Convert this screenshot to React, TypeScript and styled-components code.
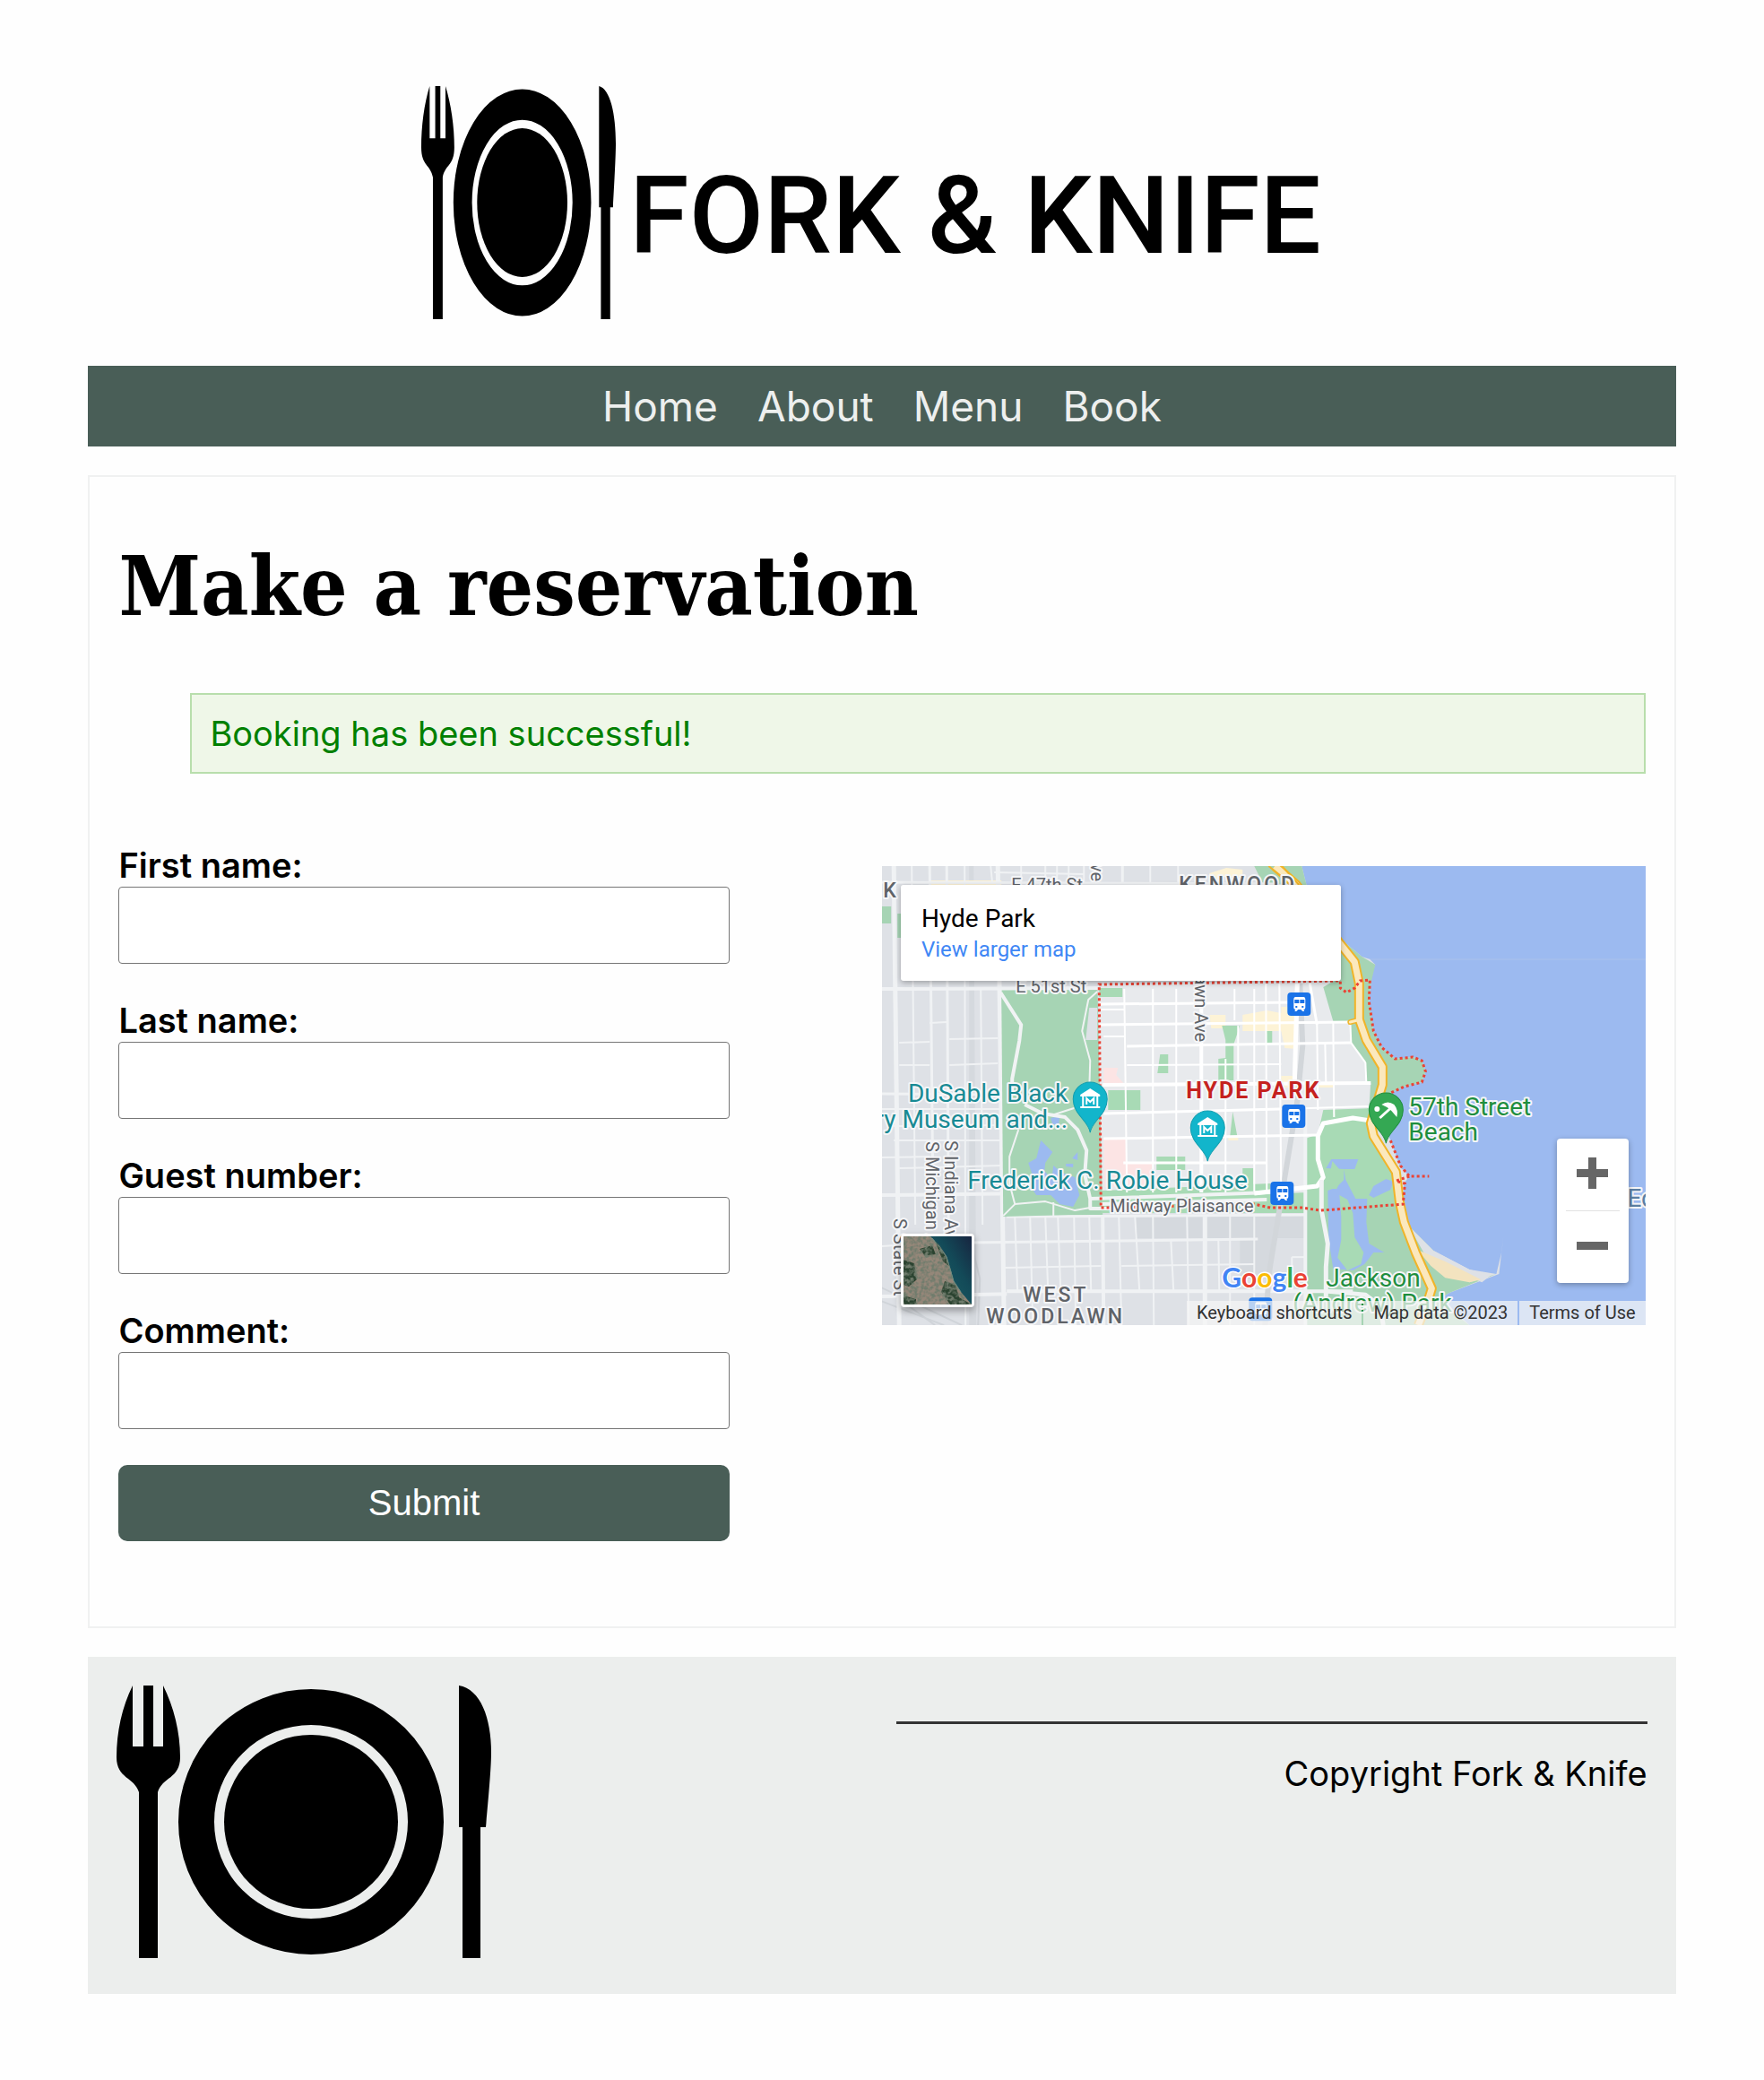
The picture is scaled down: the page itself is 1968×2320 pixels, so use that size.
import React from "react";
import styled, { createGlobalStyle } from "styled-components";

const GlobalStyle = createGlobalStyle`
  * { box-sizing: border-box; }
  body {
    margin: 0;
    background: #fefefe;
    color: #000;
    font-family: Inter, "Liberation Sans", sans-serif;
    font-size: 38px;
    line-height: 47px;
  }
`;

const sans = `Roboto, "Liberation Sans", sans-serif`;

const Page = styled.div`
  width: 90%;
  margin: 0 auto;
  padding: 96px 0;
  display: flex;
  flex-direction: column;
  gap: 32px;
`;

const Header = styled.header`
  display: flex;
  justify-content: center;
  align-items: center;
  gap: 15px;
  padding: 0 24px 20px 0;
`;

const HeaderLogo = styled.svg`
  display: block;
  width: 217px;
  height: 260px;
`;

const Wordmark = styled.span`
  padding-top: 30px;
  font-family: ${sans};
  font-size: 121px;
  font-weight: 500;
  line-height: 140px;
  white-space: nowrap;
`;

const Nav = styled.nav`
  background: #495e57;
  padding: 16px;
`;

const NavList = styled.ul`
  display: flex;
  justify-content: center;
  gap: 44px;
  margin: 0;
  padding: 0;
  list-style: none;
`;

const NavLink = styled.a`
  display: block;
  color: #edefee;
  font-size: 46px;
  line-height: 58px;
  text-decoration: none;
`;

const Card = styled.main`
  border: 2px solid #f0f1f1;
  padding: 32px;
`;

const Title = styled.h1`
  margin: 42px 0 71px;
  font-family: "DejaVu Serif Condensed", "DejaVu Serif", serif;
  font-size: 92px;
  font-weight: 700;
  line-height: 96px;
`;

const Notice = styled.p`
  margin: 0 0 0 80px;
  padding: 20px;
  border: 2px solid #b8deac;
  background: #eff7e8;
  color: #008000;
  line-height: 46px;
`;

const Columns = styled.div`
  display: grid;
  grid-template-columns: 1fr 1fr;
  align-items: start;
  margin-top: 79px;
`;

const Form = styled.form`
  width: 80%;
  padding-bottom: 63px;
`;

const Label = styled.label`
  display: block;
  font-weight: 600;
`;

const Input = styled.input`
  display: block;
  width: 100%;
  height: 86px;
  margin-bottom: 40px;
  padding: 0 20px;
  border: 1px solid #767676;
  border-radius: 4px;
  background: #fff;
  font: inherit;
`;

const SubmitButton = styled.button`
  display: block;
  width: 100%;
  height: 85px;
  border: 0;
  border-radius: 10px;
  background: #495e57;
  color: #fff;
  font-family: "Liberation Sans", Arial, sans-serif;
  font-size: 40px;
`;

const MapFrame = styled.section`
  position: relative;
  margin-top: 24px;
  aspect-ratio: 853 / 513;
  overflow: hidden;
  font-family: ${sans};
`;

const MapCanvas = styled.svg`
  display: block;
  width: 100%;
  height: 100%;
`;

const PlaceCard = styled.div`
  position: absolute;
  top: 21px;
  left: 21px;
  width: 491px;
  height: 107px;
  padding: 20px 23px;
  display: flex;
  flex-direction: column;
  border-radius: 3px;
  background: #fff;
  box-shadow: 0 2px 6px rgba(0, 0, 0, 0.3);
`;

const PlaceName = styled.strong`
  font-size: 28px;
  font-weight: 400;
  line-height: 35px;
`;

const PlaceLink = styled.a`
  color: #3f87f5;
  font-size: 24px;
  line-height: 35px;
  text-decoration: none;
`;

const ZoomBox = styled.div`
  position: absolute;
  right: 19px;
  bottom: 47px;
  width: 80px;
  padding: 0 10px;
  border-radius: 4px;
  background: #fff;
  box-shadow: 0 2px 6px rgba(0, 0, 0, 0.3);
`;

const ZoomButton = styled.button`
  display: block;
  width: 60px;
  height: 80px;
  padding: 0 11px;
  border: 0;
  background: none;

  & + & {
    height: 81px;
    border-top: 1px solid #e2e2e2;
  }
`;

const LayerButton = styled.button`
  position: absolute;
  left: 21px;
  bottom: 20px;
  width: 82px;
  height: 82px;
  padding: 0;
  border: 3px solid #fff;
  border-radius: 4px;
  overflow: hidden;
  background: #7b7567;
  box-shadow: 0 4px 8px rgba(0, 0, 0, 0.35);
`;

const Attribution = styled.div`
  position: absolute;
  right: 0;
  bottom: 0;
  display: flex;
  gap: 2px;
  font-size: 20px;
  line-height: 27px;
  color: #333;
`;

const AttributionItem = styled.span`
  padding: 0 11px;
  background: rgba(245, 245, 245, 0.72);
  white-space: nowrap;

  a {
    color: inherit;
    text-decoration: none;
  }
`;

const AttributionButton = styled.button`
  padding: 0 11px;
  border: 0;
  background: rgba(245, 245, 245, 0.72);
  color: inherit;
  font: inherit;
`;

const Footer = styled.footer`
  display: grid;
  grid-template-columns: 1fr 1fr;
  gap: 32px;
  padding: 32px 32px 40px;
  background: #eceeed;
`;

const FooterLogo = styled.svg`
  display: block;
  width: 418px;
  height: 304px;
`;

const FooterNote = styled.div`
  margin-top: 40px;
  padding-top: 32px;
  text-align: right;
  border-top: 3px solid #333;
`;

const PlaceSetting = () => (
  <>
    <path d="M18 0C6 24 0 52 0 80C0 104 20 102 25 119V304H46V119C51 102 71 104 71 80C71 52 64 24 52 0V68H41V0H30V68H18Z" />
    <circle cx="217" cy="152" r="128" fill="none" stroke="#000" strokeWidth="40" />
    <circle cx="217" cy="152" r="97" />
    <path d="M382 0C406 4 418 36 418 75C418 92 415 125 412 158H406V304H386V158H382Z" />
  </>
);

type Street = [number, number, number, number, number?];

const outerStreets: Street[] = [
  [14, 0, 20, 512, 5], [34, 0, 38, 400], [54, 0, 58, 400, 3], [73, 0, 75, 400, 3], [93, 0, 94, 512],
  [111, 137, 113, 400], [130, 0, 137, 512, 5], [122, 0, 124, 20], [156, 0, 156, 20], [183, 0, 183, 20],
  [196, 0, 196, 20], [209, 0, 209, 20], [226, 0, 226, 20], [269, 0, 269, 20, 3], [300, 0, 300, 20], [331, 0, 331, 20],
  [126, 7, 226, 9], [0, 18, 440, 20, 3], [0, 137, 243, 136, 4],
  [54, 175, 73, 174], [20, 197, 54, 196], [76, 193, 130, 192], [76, 222, 130, 220], [20, 222, 54, 222],
  [0, 254, 133, 255, 3], [0, 271, 133, 271], [14, 290, 134, 289], [0, 325, 54, 324], [14, 306, 134, 306],
  [20, 337, 134, 334], [0, 367, 245, 364, 4], [0, 424, 30, 422], [98, 420, 420, 416, 3], [138, 448, 245, 446],
  [0, 480, 140, 477, 4], [140, 474, 526, 474, 4], [268, 446, 416, 444], [140, 391, 473, 389, 3],
  [149, 391, 152, 474], [166, 391, 169, 512], [183, 391, 186, 474], [197, 391, 200, 474], [215, 391, 217, 512],
  [232, 391, 234, 474], [247, 391, 248, 512, 4], [265, 391, 268, 512], [283, 391, 288, 474], [303, 391, 304, 512],
  [323, 416, 326, 474], [341, 391, 343, 512], [361, 391, 361, 512, 5], [376, 416, 377, 474], [389, 391, 389, 512],
  [416, 391, 416, 512], [458, 436, 473, 436], [458, 436, 458, 474], [473, 270, 473, 512, 4],
];

const innerStreets: Street[] = [
  [271, 137, 274, 364], [303, 137, 303, 364], [329, 137, 329, 364], [357, 137, 357, 364, 4], [384, 215, 384, 364],
  [394, 137, 394, 172], [398, 178, 398, 244], [416, 137, 416, 366], [429, 131, 430, 366], [444, 131, 446, 366],
  [464, 131, 461, 240, 5], [478, 131, 486, 177, 3], [486, 177, 487, 272], [504, 173, 505, 280], [495, 197, 496, 242],
  [243, 154, 460, 152, 3], [243, 160, 271, 160], [243, 177, 523, 174, 3], [248, 190, 271, 190], [274, 201, 524, 197, 3],
  [274, 222, 446, 221], [247, 244, 546, 242, 4], [248, 276, 445, 271, 3], [248, 304, 487, 300, 3],
  [270, 331, 430, 331, 3], [446, 271, 544, 268], [540, 219, 541, 242], [523, 173, 524, 197], [524, 197, 540, 219],
];

const Streets = ({ list, color }: { list: Street[]; color: string }) => (
  <g stroke={color}>
    {list.map(([x1, y1, x2, y2, w], i) => (
      <line key={i} x1={x1} y1={y1} x2={x2} y2={y2} strokeWidth={w ?? 2} />
    ))}
  </g>
);

const Station = ({ x, y }: { x: number; y: number }) => (
  <g transform={`translate(${x} ${y})`}>
    <rect width="26" height="26" rx="4" fill="#1a73e8" />
    <path
      fill="#fff"
      fillRule="evenodd"
      d="M9 5H18Q20 5 20 8V17Q20 19 18 19L19 21H17L15 19H12L10 21H8L9 19Q7 19 7 17V8Q7 5 9 5ZM8 8V12H13V8ZM14 8V12H19V8ZM9 15V17H11V15ZM16 15V17H18V15Z"
    />
  </g>
);

const Pin = ({ x, y, fill, edge, children }: { x: number; y: number; fill: string; edge: string; children: React.ReactNode }) => (
  <g transform={`translate(${x} ${y})`}>
    <path d="M0 37C-2 24 -19 17 -19 0A19 19 0 0 1 19 0C19 17 2 24 0 37Z" fill={fill} stroke={edge} />
    {children}
  </g>
);

const MuseumMark = () => (
  <g>
    <path d="M-11 -5L0 -12L11 -5V-3H-11ZM-9 -3H-7V8H-9ZM7 -3H9V8H7ZM-11 8H11V10H-11Z" fill="#fff" />
    <path d="M-4 6V-1L0 3L4 -1V6" fill="none" stroke="#fff" strokeWidth="2" />
  </g>
);

const coast =
  "M0 0H469L474 20L512 81L536 101L545 104L551 110L546 122L546 131L544 151L549 184L558 202L573 215L593 213L603 217L607 229L603 241L583 246L566 254L562 290L568 306L579 336L589 346L583 354L582 377L588 401L616 429L656 450L686 455L692 430L694 412L689 455L633 476L620 484L640 496L656 512H0Z";

const highway =
  "M439 0L463 21L512 87L528 107L533 131V171L541 194L559 224V244L546 287L549 301L574 341L578 374L583 397L596 431L614 471L610 484L599 512";

const MapDrawing = () => (
  <MapCanvas viewBox="0 0 853 512" preserveAspectRatio="xMidYMid slice" role="img" aria-label="Map of Hyde Park">
    <rect width="853" height="512" fill="#9cbaf0" />
    <path d="M500 104H853" stroke="#a9c2ea" />
    <path d={coast} fill="#dee1e6" />
    <path d="M243 132L545 128V380L245 387Z" fill="#e8eaed" clipPath="url(#land)" />
    <clipPath id="land"><path d={coast} /></clipPath>
    <path d="M98 0H103L106 512H98ZM283 390H473V415H283ZM400 415H436V460H400Z" fill="#d5d9de" />
    <path d="M0 485L70 512M0 470L90 512M16 480L60 512M100 420L110 460L108 512" stroke="#d0d4d9" fill="none" strokeWidth="2" />
    <path
      fill="#fdf3d6"
      d="M54 16H134V21H54ZM366 8L385 2L403 4V12H380V20H366ZM366 166L384 166V181H368ZM403 166L430 161L446 164V157H463V204L450 203L446 184H403ZM446 234H463V247L504 240V247H446ZM387 300H398V306H387Z"
    />
    <path fill="#fce4e4" d="M248 225H264L262 233L271 243H248ZM248 304H273V331H302V358H249Z" />
    <path
      fill="#a6d4b4"
      d="M133 137H241L247 390L136 391ZM0 45H11V64H0ZM18 53H24V80H18ZM416 0H469L474 20L512 81L536 101L551 110L546 131L544 151L549 184L558 202L573 215L593 213L603 217L607 229L603 241L583 246L566 254L544 271L546 242H541L540 219L524 197L523 173H504L493 135L505 128V87L455 20H426Z"
    />
    <path
      fill="#a8dab5"
      d="M243 136H269V146H243ZM253 250H289V272H253ZM307 324H339V339H307ZM308 231L311 210H320V231ZM380 178H400L393 199V239H376V215L384 214V194ZM429 184H436V197H429ZM389 301L392 274L397 301ZM403 337H415V361H403ZM245 362L434 354V366L473 364V387H245ZM473 304L487 299L493 272L544 270L546 290L574 341L582 377L473 390Z"
    />
    <path fill="#a6d4b4" d="M473 384L580 376L588 401L616 429L656 464L686 455L633 476L620 484L656 512H473Z" />
    <path fill="#dee1e6" d="M588 401L616 429L656 450L680 456L670 464L610 440Z" />
    <path fill="#f3e3bf" d="M598 428L629 441L669 461L656 464L629 459L613 446Z" />
    <Streets list={outerStreets} color="#f0f2f4" />
    <path d="M467 131L470 200L464 262L433 451L428 512" stroke="#d2d6da" strokeWidth="6" fill="none" />
    <path fill="#a6d4b4" d="M134 140H241L246 380L245 388L136 391Z" />
    <path fill="#dee1e6" d="M232 158H241V194H228Z" />
    <Streets list={innerStreets} color="#fff" />
    <path
      fill="#9cbaf0"
      d="M178 306L191 319L183 331L182 340L190 350L192 334L200 341L206 344L216 347L221 367L214 380L199 377L189 367L173 367L164 354L168 343L164 331L173 326ZM206 332H214V336L206 335ZM213 326L219 319V328ZM189 281L199 279L198 288H191ZM502 327H532L528 338H516L518 350L529 371H542L541 397L544 421L561 431L549 431L539 444L526 451L504 449L499 417L498 362L508 358L516 350V338L496 337ZM544 367L549 357L563 349L571 352L568 361L549 370Z"
    />
    <path fill="#a8dab5" d="M503 329L516 344L508 360H498ZM511 367L520 372L526 387L528 414L538 431L535 444L520 451L509 437L513 417L513 391Z" />
    <g fill="none" stroke="#f1f3f4" strokeLinejoin="round">
      <path d="M133 141L156 177L154 195L146 237V254" strokeWidth="4" />
      <path d="M241 140L231 149L224 184L233 217L232 250" strokeWidth="2" />
      <path d="M160 266L180 276L205 280L219 294L229 317L227 344L233 371V382H270" strokeWidth="4" />
      <path d="M215 270L190 278M153 294L143 324V354L149 377L183 374L216 384L233 381M149 377L136 390M192 375V390" strokeWidth="2" />
      <path d="M233 371L434 364M245 377L430 372" strokeWidth="4" />
      <path d="M546 284L526 281L493 287L487 301V327L493 347L486 357L416 365" stroke="#fff" strokeWidth="5" />
      <path d="M491 350V384L498 421L496 447V480M496 474L540 478L556 490L560 512" strokeWidth="5" />
    </g>
    <path d={highway} fill="none" stroke="#f0b429" strokeWidth="11" strokeLinejoin="round" />
    <path d="M523 174L533 171" stroke="#f0b429" strokeWidth="6" strokeLinecap="round" />
    <path d="M523 174L535 171" stroke="#fdebbd" strokeWidth="3" strokeLinecap="round" />
    <path d={highway} fill="none" stroke="#fbe8bd" strokeWidth="7" strokeLinejoin="round" />
    <path d="M447 0L466 21M432 0L447 12" stroke="#f0b429" strokeWidth="2" />
    <path
      d="M568 306L579 334L589 346H611M589 346L574 351L584 354L582 377L490 384L470 381H434L416 377L245 381L243 132L512 128V136L519 141L528 136L534 128L545 127L544 151L549 184L558 202L573 215L593 213L603 217L607 229L603 241L583 246L566 254"
      fill="none"
      stroke="#ea4335"
      strokeWidth="3"
      strokeDasharray="3 3"
    />

    <g fontFamily='Roboto, "Liberation Sans", sans-serif' stroke="#f5f6f8" strokeWidth="4" strokeLinejoin="round" paintOrder="stroke">
      <g fill="#5f6368" fontSize="20">
        <text x="145" y="28">E 47th St</text>
        <text x="150" y="141">E 51st St</text>
        <text x="255" y="386">Midway Plaisance</text>
        <text transform="translate(234 17) rotate(90)" textAnchor="end">Drexel Ave</text>
        <text transform="translate(350 196) rotate(90)" textAnchor="end">S Woodlawn Ave</text>
        <text transform="translate(71 306) rotate(90)">S Indiana Ave</text>
        <text transform="translate(50 307) rotate(90)">S Michigan Ave</text>
        <text transform="translate(14 393) rotate(90)">S State St</text>
      </g>
      <g fill="#5f6368" fontSize="23" fontWeight="500" letterSpacing="3">
        <text x="332" y="28">KENWOOD</text>
        <text x="2" y="35">K</text>
        <text x="158" y="486">WEST</text>
        <text x="117" y="510">WOODLAWN</text>
      </g>
      <text x="340" y="259" fill="#c5221f" fontSize="25" fontWeight="700" letterSpacing="2">HYDE PARK</text>
      <g fill="#188a94" fontSize="28">
        <text x="208" y="263" textAnchor="end">DuSable Black</text>
        <text x="208" y="292" textAnchor="end">ry Museum and...</text>
        <text x="96" y="360">Frederick C. Robie House</text>
      </g>
      <g fill="#1e8e3e" fontSize="28">
        <text x="588" y="278">57th Street</text>
        <text x="588" y="306">Beach</text>
        <text x="496" y="469">Jackson</text>
        <text x="459" y="497">(Andrew) Park</text>
      </g>
      <text x="832" y="380" fill="#5b7fa3" fontSize="28">Ed</text>
    </g>

    <Station x={453} y={141} />
    <Station x={447} y={266} />
    <Station x={434} y={352} />
    <Station x={410} y={481} />

    <Pin x={233} y={260} fill="#12b5cb" edge="#129eaf"><MuseumMark /></Pin>
    <Pin x={364} y={292} fill="#12b5cb" edge="#129eaf"><MuseumMark /></Pin>
    <Pin x={563} y={272} fill="#34a853" edge="#1e8e3e">
      <circle cx="-10" cy="-1" r="3" fill="#fff" />
      <path d="M-5 -6Q2 -11 9 -6Q14 0 12 8L6 1L4 -1L1 -3ZM3 -2L5 0L-6 10L-8 8Z" fill="#fff" />
    </Pin>

    <text x="380" y="470" fontFamily="Lato, sans-serif" fontSize="30" fontWeight="700" stroke="#fff" strokeWidth="3" paintOrder="stroke">
      <tspan fill="#4285f4">G</tspan>
      <tspan fill="#ea4335">o</tspan>
      <tspan fill="#fbbc04">o</tspan>
      <tspan fill="#4285f4">g</tspan>
      <tspan fill="#34a853">l</tspan>
      <tspan fill="#ea4335">e</tspan>
    </text>
  </MapCanvas>
);

const Satellite = () => (
  <svg width="76" height="76" viewBox="0 0 76 76" aria-hidden="true">
    <defs>
      <linearGradient id="lake" x1="0" y1="1" x2="1" y2="0">
        <stop offset="0" stopColor="#1b6468" />
        <stop offset="0.6" stopColor="#134a58" />
        <stop offset="1" stopColor="#172540" />
      </linearGradient>
      <filter id="grain" x="0" y="0" width="1" height="1">
        <feTurbulence type="fractalNoise" baseFrequency="0.25" numOctaves="3" seed="4" />
        <feColorMatrix values="0 0 0 0 0.16  0 0 0 0 0.2  0 0 0 0 0.15  0 3 0 0 -1.1" />
      </filter>
    </defs>
    <rect width="76" height="76" fill="#958779" />
    <path d="M0 26L12 30L15 48L6 56L0 54ZM18 14L32 10L36 20L24 22ZM46 50L58 54L62 68L76 76H52L42 62ZM0 66L14 70V76H0ZM34 2L46 20L52 34L44 28Z" fill="#2b4330" />
    <rect width="76" height="76" filter="url(#grain)" />
    <path d="M30 0L40 10L48 22L53 38L56 50L64 62L76 76V0Z" fill="url(#lake)" />
    <path d="M32 2L48 23L56 50L64 62" fill="none" stroke="#6d8c80" />
  </svg>
);

const fields = [
  { id: "first-name", label: "First name:" },
  { id: "last-name", label: "Last name:" },
  { id: "guests", label: "Guest number:" },
  { id: "comment", label: "Comment:" },
];

export default function App() {
  return (
    <>
      <GlobalStyle />
      <Page>
        <Header>
          <HeaderLogo viewBox="0 0 418 304" preserveAspectRatio="none" aria-hidden="true">
            <PlaceSetting />
          </HeaderLogo>
          <Wordmark>FORK &amp; KNIFE</Wordmark>
        </Header>
        <Nav>
          <NavList>
            {["Home", "About", "Menu", "Book"].map((name) => (
              <li key={name}>
                <NavLink href={`#${name.toLowerCase()}`}>{name}</NavLink>
              </li>
            ))}
          </NavList>
        </Nav>
        <Card>
          <Title>Make a reservation</Title>
          <Notice role="status">Booking has been successful!</Notice>
          <Columns>
            <Form onSubmit={(event) => event.preventDefault()}>
              {fields.map((field) => (
                <React.Fragment key={field.id}>
                  <Label htmlFor={field.id}>{field.label}</Label>
                  <Input id={field.id} name={field.id} type="text" />
                </React.Fragment>
              ))}
              <SubmitButton type="submit">Submit</SubmitButton>
            </Form>
            <MapFrame>
              <MapDrawing />
              <PlaceCard>
                <PlaceName>Hyde Park</PlaceName>
                <PlaceLink href="#map">View larger map</PlaceLink>
              </PlaceCard>
              <LayerButton type="button" aria-label="Show satellite imagery">
                <Satellite />
              </LayerButton>
              <ZoomBox>
                <ZoomButton type="button" aria-label="Zoom in">
                  <svg width="37" height="37" viewBox="0 0 37 37">
                    <path d="M14 1H23V14H36V23H23V36H14V23H1V14H14Z" fill="#666" />
                  </svg>
                </ZoomButton>
                <ZoomButton type="button" aria-label="Zoom out">
                  <svg width="37" height="37" viewBox="0 0 37 37">
                    <path d="M1 14H36V23H1Z" fill="#666" />
                  </svg>
                </ZoomButton>
              </ZoomBox>
              <Attribution>
                <AttributionButton type="button">Keyboard shortcuts</AttributionButton>
                <AttributionItem>Map data ©2023</AttributionItem>
                <AttributionItem>
                  <a href="#terms">Terms of Use</a>
                </AttributionItem>
              </Attribution>
            </MapFrame>
          </Columns>
        </Card>
        <Footer>
          <FooterLogo viewBox="0 0 418 304" aria-hidden="true">
            <PlaceSetting />
          </FooterLogo>
          <FooterNote>Copyright Fork &amp; Knife</FooterNote>
        </Footer>
      </Page>
    </>
  );
}
